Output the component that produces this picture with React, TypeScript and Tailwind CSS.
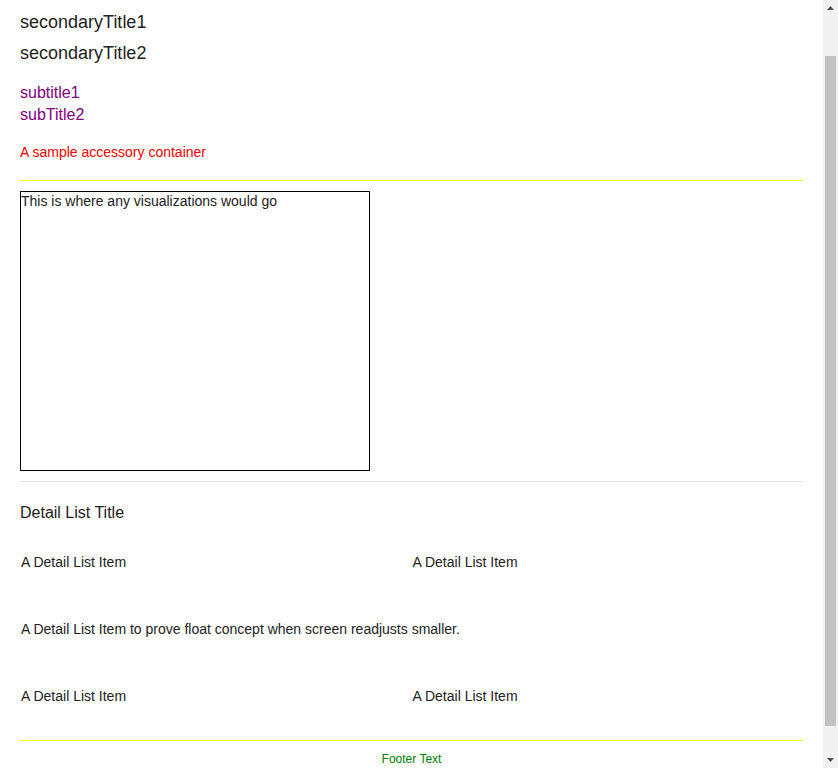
import React from "react";

function FakeScrollbar() {
  return (
    <div className="fixed right-0 top-0 w-[15px] h-[768px] bg-[#f1f1f1]">
      <svg className="absolute left-0 top-0" width="15" height="15" viewBox="0 0 15 15">
        <polygon points="4,10 11,10 7.5,6" fill="#505050" />
      </svg>
      <div className="absolute left-[2px] top-[56px] w-[11px] h-[670px] bg-[#c1c1c1]" />
      <svg className="absolute left-0 bottom-0" width="15" height="15" viewBox="0 0 15 15">
        <polygon points="4,5 11,5 7.5,9" fill="#505050" />
      </svg>
    </div>
  );
}

export default function App() {
  const font = { fontFamily: '"Liberation Sans", Arial, sans-serif' };

  return (
    <div className="bg-white h-[768px] overflow-hidden">
      <div className="mr-[15px] px-[20px] pt-[10px] text-[#222222]" style={font}>
        <div className="text-[18px] leading-[24px]">secondaryTitle1</div>
        <div className="text-[18px] leading-[24px] mt-[7px]">secondaryTitle2</div>

        <div className="mt-[17px] text-[16px] leading-[22px] text-[#800080]">
          <div>subtitle1</div>
          <div>subTitle2</div>
        </div>

        <div className="mt-[16px] text-[14px] leading-[20px] text-[#ff0000]">
          A sample accessory container
        </div>

        <div className="mt-[18px] h-px bg-[#ffff00]" />

        <div className="mt-[10px] w-[350px] h-[280px] border border-black text-[14px] leading-[18px]">
          This is where any visualizations would go
        </div>

        <div className="mt-[10px] h-px bg-[#e6e6e6]" />

        <div className="mt-[20px] text-[16px] leading-[22px]">Detail List Title</div>

        <div className="mt-[28px] grid grid-cols-2 text-[14px] leading-[20px]">
          <div className="pl-px h-[67px]">A Detail List Item</div>
          <div className="pl-px h-[67px]">A Detail List Item</div>
          <div className="pl-px h-[67px] col-span-2">
            A Detail List Item to prove float concept when screen readjusts smaller.
          </div>
          <div className="pl-px h-[54px]">A Detail List Item</div>
          <div className="pl-px h-[54px]">A Detail List Item</div>
        </div>

        <div className="h-px bg-[#ffff00]" />

        <div className="mt-[10px] text-center text-[12px] leading-[16px] text-[#008000]">
          Footer Text
        </div>
      </div>
      <FakeScrollbar />
    </div>
  );
}
